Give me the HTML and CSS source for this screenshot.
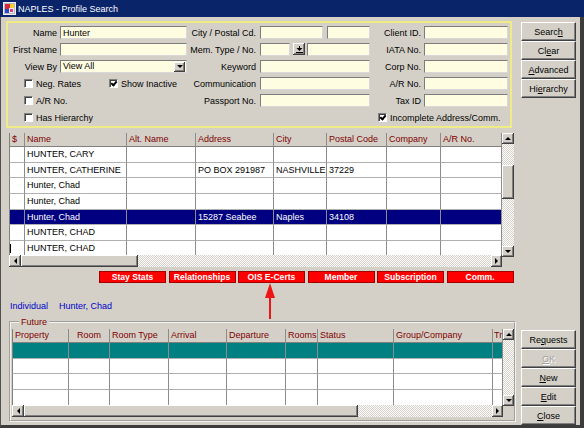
FILE: index.html
```html
<!DOCTYPE html>
<html lang="en">
<head>
  <meta charset="UTF-8" />
  <title>NAPLES - Profile Search</title>
  <link rel="stylesheet" href="styles.css">
</head>
<body>
<div class="window">
  <div class="titlebar">
    <svg class="app-icon" width="13" height="13" viewBox="0 0 13 13">
      <rect x="0.5" y="0.5" width="12" height="12" fill="#b8b8c8" stroke="#f0f0f0"/>
      <rect x="2" y="2" width="5" height="5" fill="#d8283c"/>
      <rect x="7" y="2" width="4" height="4" fill="#f2d22a"/>
      <rect x="2" y="7" width="4" height="4" fill="#2a48c8"/>
      <rect x="6" y="6" width="5" height="5" fill="#ececec"/>
      <rect x="7" y="7" width="3" height="3" fill="#e04080"/>
    </svg>
    <span>NAPLES - Profile Search</span>
  </div>

  <div class="frame">
    <div class="left">
      <!-- search criteria -->
      <div class="search-panel">
        <span class="lbl">Name</span>
        <input class="field" value="Hunter">
        <span class="lbl mid">City / Postal Cd.</span>
        <div class="pair"><input class="field city"><input class="field"></div>
        <span class="lbl">Client ID.</span>
        <input class="field">

        <span class="lbl">First Name</span>
        <input class="field">
        <span class="lbl mid">Mem. Type / No.</span>
        <div class="pair mem">
          <input class="field type">
          <span class="mini-btn">
            <svg width="7" height="7" viewBox="0 0 7 7"><rect x="3" y="0" width="1" height="2" fill="#000"/><polygon points="0.5,2 6.5,2 3.5,5" fill="#000"/><rect x="0" y="6" width="7" height="1" fill="#000"/></svg>
          </span>
          <input class="field">
        </div>
        <span class="lbl">IATA No.</span>
        <input class="field">

        <span class="lbl">View By</span>
        <div class="field select"><span>View All</span><span class="sbtn down"></span></div>
        <span class="lbl mid">Keyword</span>
        <input class="field">
        <span class="lbl">Corp No.</span>
        <input class="field">

        <div class="checks">
          <span class="check wide"><span class="box"></span>Neg. Rates</span>
          <span class="check"><span class="box on"></span>Show Inactive</span>
        </div>
        <span class="lbl mid">Communication</span>
        <input class="field">
        <span class="lbl">A/R No.</span>
        <input class="field">

        <div class="checks">
          <span class="check"><span class="box"></span>A/R No.</span>
        </div>
        <span class="lbl mid">Passport No.</span>
        <input class="field">
        <span class="lbl">Tax ID</span>
        <input class="field">

        <div class="checks">
          <span class="check"><span class="box"></span>Has Hierarchy</span>
        </div>
        <span></span><span></span>
        <div class="checks right">
          <span class="check"><span class="box on"></span>Incomplete Address/Comm.</span>
        </div>
      </div>

      <!-- profile results -->
      <div class="grid">
        <div class="grid-main">
          <div class="grid-view guests">
            <div class="row head">
              <div class="cell">$</div><div class="cell">Name</div><div class="cell">Alt. Name</div><div class="cell">Address</div><div class="cell">City</div><div class="cell">Postal Code</div><div class="cell">Company</div><div class="cell">A/R No.</div>
            </div>
            <div class="row"><div class="cell"></div><div class="cell">HUNTER, CARY</div><div class="cell"></div><div class="cell"></div><div class="cell"></div><div class="cell"></div><div class="cell"></div><div class="cell"></div></div>
            <div class="row"><div class="cell"></div><div class="cell">HUNTER, CATHERINE</div><div class="cell"></div><div class="cell">PO BOX 291987</div><div class="cell">NASHVILLE</div><div class="cell">37229</div><div class="cell"></div><div class="cell"></div></div>
            <div class="row"><div class="cell"></div><div class="cell">Hunter, Chad</div><div class="cell"></div><div class="cell"></div><div class="cell"></div><div class="cell"></div><div class="cell"></div><div class="cell"></div></div>
            <div class="row"><div class="cell"></div><div class="cell">Hunter, Chad</div><div class="cell"></div><div class="cell"></div><div class="cell"></div><div class="cell"></div><div class="cell"></div><div class="cell"></div></div>
            <div class="row sel"><div class="cell"></div><div class="cell">Hunter, Chad</div><div class="cell"></div><div class="cell">15287 Seabee</div><div class="cell">Naples</div><div class="cell">34108</div><div class="cell"></div><div class="cell"></div></div>
            <div class="row"><div class="cell"></div><div class="cell">HUNTER, CHAD</div><div class="cell"></div><div class="cell"></div><div class="cell"></div><div class="cell"></div><div class="cell"></div><div class="cell"></div></div>
            <div class="row"><div class="cell"><span class="caret"></span></div><div class="cell">HUNTER, CHAD</div><div class="cell"></div><div class="cell"></div><div class="cell"></div><div class="cell"></div><div class="cell"></div><div class="cell"></div></div>
          </div>
          <div class="hscroll">
            <span class="sbtn left"></span>
            <span class="thumb guests-thumb"></span>
            <span class="track"></span>
            <span class="sbtn right"></span>
          </div>
        </div>
        <div class="vscroll guests-v">
          <span class="sbtn up"></span>
          <span class="track"><span class="thumb"></span></span>
          <span class="sbtn down"></span>
        </div>
      </div>

      <div class="actions">
        <span class="act">Stay Stats</span>
        <span class="act">Relationships</span>
        <span class="act">OIS E-Certs</span>
        <span class="act">Member</span>
        <span class="act">Subscription</span>
        <span class="act">Comm.</span>
      </div>

      <div class="owner"><span>Individual</span><span>Hunter, Chad</span></div>

      <fieldset class="future">
        <legend>Future</legend>
        <div class="grid">
          <div class="grid-main">
            <div class="grid-view stays">
              <div class="row head">
                <div class="cell">Property</div><div class="cell center">Room</div><div class="cell">Room Type</div><div class="cell">Arrival</div><div class="cell">Departure</div><div class="cell">Rooms</div><div class="cell">Status</div><div class="cell">Group/Company</div><div class="cell cut">Tr</div>
              </div>
              <div class="row teal"><div class="cell"></div><div class="cell"></div><div class="cell"></div><div class="cell"></div><div class="cell"></div><div class="cell"></div><div class="cell"></div><div class="cell"></div><div class="cell"></div></div>
              <div class="row"><div class="cell"></div><div class="cell"></div><div class="cell"></div><div class="cell"></div><div class="cell"></div><div class="cell"></div><div class="cell"></div><div class="cell"></div><div class="cell"></div></div>
              <div class="row"><div class="cell"></div><div class="cell"></div><div class="cell"></div><div class="cell"></div><div class="cell"></div><div class="cell"></div><div class="cell"></div><div class="cell"></div><div class="cell"></div></div>
              <div class="row"><div class="cell"></div><div class="cell"></div><div class="cell"></div><div class="cell"></div><div class="cell"></div><div class="cell"></div><div class="cell"></div><div class="cell"></div><div class="cell"></div></div>
            </div>
            <div class="hscroll">
              <span class="sbtn left"></span>
              <span class="thumb stays-thumb"></span>
              <span class="track"></span>
              <span class="sbtn right"></span>
            </div>
          </div>
          <div class="vscroll stays-v">
            <span class="sbtn up"></span>
            <span class="track"></span>
            <span class="sbtn down"></span>
          </div>
        </div>
      </fieldset>
    </div>

    <div class="side">
      <div class="btn-group">
        <button class="btn">Searc<u>h</u></button>
        <button class="btn">Cl<u>e</u>ar</button>
        <button class="btn"><u>A</u>dvanced</button>
        <button class="btn">Hi<u>e</u>rarchy</button>
      </div>
      <div class="btn-group">
        <button class="btn">Re<u>q</u>uests</button>
        <button class="btn" disabled><u>O</u>K</button>
        <button class="btn"><u>N</u>ew</button>
        <button class="btn"><u>E</u>dit</button>
        <button class="btn"><u>C</u>lose</button>
      </div>
    </div>
  </div>

  <!-- callout arrow pointing at OIS E-Certs -->
  <svg class="callout" width="12" height="37" viewBox="0 0 12 37">
    <polygon points="6,0 11,15 7,15 7,36 5,36 5,15 1,15" fill="#ee1515"/>
  </svg>
</div>
</body>
</html>
```

FILE: styles.css
```css
* { box-sizing: border-box; }
body { margin: 0; background: #d4d0c8; font-family: "Liberation Sans", Arial, sans-serif; font-size: 9px; color: #000; }

.window { position: relative; width: 584px; height: 428px; display: flex; flex-direction: column; overflow: hidden; background: #d4d0c8; }
.titlebar { height: 17px; flex: none; background: #0a246a; color: #fff; display: flex; align-items: center; padding-left: 3px; font-size: 9px; }
.app-icon { margin-right: 2px; }
.frame { flex: 1; display: flex; border-left: 1px solid #505050; border-right: 4px solid #3c3c3c; border-bottom: 3px solid #3c3c3c; padding: 0 4px 0 5px; }
.left { width: 510px; display: flex; flex-direction: column; }

/* search panel */
.search-panel { width: 506px; height: 107px; margin-top: 4px; border: 2px solid #efeb86; padding-top: 3px; display: grid; grid-template-columns: 52px 127px 73px 110px 54px 84px; grid-template-rows: repeat(6, 13px); row-gap: 4px; align-items: center; }
.lbl { text-align: right; padding-right: 3px; white-space: nowrap; }
.lbl.mid { padding-right: 4px; }
.field { display: block; width: 100%; height: 13px; margin: 0; padding: 0 2px; border: 1px solid; border-color: #7c7c7c #d8d8d8 #d8d8d8 #7c7c7c; background: #fffde1; font: inherit; color: #000; outline: none; }
.pair { display: flex; gap: 4px; }
.pair .field { flex: 1; width: auto; min-width: 0; }
.pair .city { flex: none; width: 63px; }
.pair.mem { gap: 0; }
.pair.mem .type { flex: none; width: 30px; margin-right: 3px; }
.mini-btn { width: 12px; height: 12px; margin-right: 2px; background: #d4d0c8; box-shadow: inset -1px -1px #404040, inset 1px 1px #fff, inset -2px -2px #808080; display: flex; align-items: center; justify-content: center; }
.select { display: flex; align-items: center; justify-content: space-between; padding-right: 1px; line-height: 11px; }
.select .sbtn { width: 11px; height: 10px; }

.checks { grid-column: span 2; display: flex; padding-left: 16px; }
.checks.right { padding-left: 8px; }
.check { display: flex; align-items: center; gap: 3px; white-space: nowrap; }
.check.wide { width: 85px; }
.box { position: relative; width: 9px; height: 9px; background: #fff; border: 1px solid; border-color: #808080 #fff #fff #808080; box-shadow: inset 1px 1px #404040; }
.box.on::after { content: ""; position: absolute; left: 2px; top: 0px; width: 2px; height: 4px; border: solid #000; border-width: 0 2px 2px 0; transform: rotate(40deg); }

/* data grids */
.grid { display: flex; margin: 5px 0 0 3px; width: 505px; }
.grid-main { width: 493px; display: flex; flex-direction: column; }
.grid-view { height: 122px; overflow: hidden; background: #fff; }
.row { display: grid; height: 15.67px; }
.guests .row { grid-template-columns: 16px 102px 69px 78px 53px 60px 54px 61px; }
.stays .row { grid-template-columns: 57px 41px 59px 58px 59px 32px 76px 99px 10px; }
.cell { border-right: 1px solid #8c8c8c; border-bottom: 1px solid #b0b0b0; padding: 0 2px; white-space: nowrap; overflow: hidden; line-height: 14.5px; }
.row .cell:first-child { border-left: 1px solid #808080; }
.row.head { height: 14px; }
.head .cell { background: #d4d0c8; color: #800000; border-bottom-color: #808080; line-height: 13px; }
.head .center { text-align: center; }
.head .cut { padding: 0 0 0 1px; }
.row.sel .cell { background: #000080; color: #fff; }
.row.teal .cell { background: #008080; }
.caret { display: inline-block; width: 1px; height: 9px; margin: 3px 0 0 -2px; vertical-align: top; background: #000; }

.track { flex: 1; }
.hscroll { height: 12px; display: flex; background: repeating-conic-gradient(#d4d0c8 0 25%, #fff 0 50%) 0 0 / 2px 2px; }
.vscroll { width: 12px; height: 124px; display: flex; flex-direction: column; background: repeating-conic-gradient(#d4d0c8 0 25%, #fff 0 50%) 0 0 / 2px 2px; }
.vscroll .track { display: flex; flex-direction: column; }
.sbtn, .thumb { flex: none; background: #d4d0c8; box-shadow: inset -1px -1px #404040, inset 1px 1px #fff, inset -2px -2px #808080; }
.sbtn { display: flex; align-items: center; justify-content: center; }
.sbtn::after { content: ""; border: 0 solid transparent; }
.hscroll .sbtn { width: 12px; height: 12px; }
.hscroll .sbtn.right { width: 11px; }
.vscroll .sbtn { width: 12px; height: 11px; }
.sbtn.up::after { border-width: 0 3px 3px; border-bottom-color: #000; }
.sbtn.down::after { border-width: 3px 3px 0; border-top-color: #000; }
.sbtn.left::after { border-width: 3px 3px 3px 0; border-right-color: #000; }
.sbtn.right::after { border-width: 3px 0 3px 3px; border-left-color: #000; }
.guests-thumb { width: 117px; }
.guests-v .thumb { margin-top: 21px; height: 34px; }
.stays-thumb { width: 334px; }

/* red shortcut buttons */
.actions { display: flex; gap: 2.5px; margin: 4px 0 0 93px; height: 12px; }
.act { width: 67px; height: 12px; background: #ff0000; border: 1px solid #a00000; color: #fff; font-weight: bold; font-size: 8.6px; line-height: 10px; text-align: center; white-space: nowrap; }

.owner { margin: 17px 0 0 4px; line-height: 12px; height: 12px; color: #0000c8; display: flex; gap: 11px; }

.future { margin: 4px 0 0 3px; padding: 1px 0 3px 1px; width: 507px; border: 2px groove #f4f2ee; min-width: 0; }
.future legend { margin-left: 7px; padding: 0 2px; color: #800000; line-height: 12px; height: 12px; }
.future .grid { margin: 0; width: 502px; }
.future .grid-main { width: 491px; }
.future .grid-view { height: 76px; }
.stays-v { width: 11px; height: 77px; }
.stays-v .sbtn { width: 11px; }

/* command buttons */
.side { width: 55px; margin-left: 5px; display: flex; flex-direction: column; justify-content: space-between; padding-top: 5px; }
.btn-group { display: flex; flex-direction: column; }
.btn { width: 55px; height: 19px; margin: 0; padding: 0; background: #d4d0c8; border: 1px solid; border-color: #fff #404040 #404040 #fff; box-shadow: inset -1px -1px #808080; font: inherit; color: #000; }
.btn:disabled { color: #a0a0a0; text-shadow: 1px 1px #fff; }

.callout { position: absolute; left: 264px; top: 283px; }
```
